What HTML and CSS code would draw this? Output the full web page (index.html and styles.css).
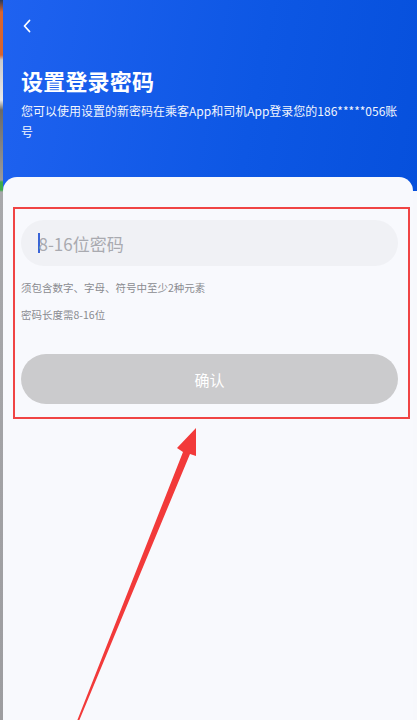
FILE: index.html
```html
<!DOCTYPE html>
<html lang="zh">
<head>
<meta charset="utf-8">
<link rel="stylesheet" href="styles.css">
</head>
<body>
<div class="screen">
  <div class="edge"></div>
  <div class="app">
    <header class="header">
      <div class="back">
        <svg width="10" height="14" viewBox="0 0 10 14"><path d="M7.5 1.5 L2.5 7 L7.5 12.5" fill="none" stroke="#fff" stroke-width="1.8" stroke-linecap="round" stroke-linejoin="round"/></svg>
      </div>
      <h1 class="title">设置登录密码</h1>
      <p class="desc">您可以使用设置的新密码在乘客App和司机App登录您的186*****056账号</p>
    </header>
    <main class="card">
      <div class="highlight">
        <div class="input"><span class="caret"></span><span class="placeholder">8-16位密码</span></div>
        <p class="hint first">须包含数字、字母、符号中至少2种元素</p>
        <p class="hint">密码长度需8-16位</p>
        <button class="confirm">确认</button>
      </div>
    </main>
  </div>
  <svg class="arrow" width="417" height="720" viewBox="0 0 417 720">
    <path d="M77 721 L183 452 L177 448 L196 428 L196 456 L190 454 L79 721 Z" fill="#f23a3a"/>
  </svg>
</div>
</body>
</html>
```
FILE: styles.css
```css
html, body { margin: 0; padding: 0; }
body {
  width: 417px;
  height: 720px;
  overflow: hidden;
  font-family: "Noto Sans CJK SC", "Noto Sans", sans-serif;
  background: #f7f8fc;
}
.screen {
  position: relative;
  display: flex;
  width: 417px;
  height: 720px;
}
.edge {
  width: 3px;
  flex: none;
  background: linear-gradient(to bottom, #2a3a5a 0, #d8642e 12px, #d8642e 55px, #c9c9cc 60px, #e9e9ea 100px, #6a6a6a 110px, #9a9a9c 180px, #3faa4a 182px, #3faa4a 190px, #a8a8ab 192px, #9d9da0 720px);
}
.app {
  flex: 1;
  display: flex;
  flex-direction: column;
  background: #f7f8fc;
}
.header {
  background: linear-gradient(100deg, #1f62f0 0%, #0d57e4 60%, #0650dc 100%);
  color: #fff;
  padding: 18px 12px 0 18px;
  height: 191px;
  box-sizing: border-box;
}
.back { height: 16px; padding-left: 1px; display: flex; align-items: center; }
.title {
  margin: 31px 0 0 0;
  font-size: 22px;
  font-weight: 700;
  line-height: 30px;
  letter-spacing: 0.2px;
}
.desc {
  margin: 5px 0 0 0;
  font-size: 12px;
  line-height: 21px;
  opacity: 0.95;
}
.card {
  flex: 1;
  margin-top: -14px;
  margin-right: 4px;
  background: #f8f9fd;
  border-radius: 14px 14px 0 0;
  padding: 30px 0 0 10px;
}
.highlight {
  width: 397px;
  box-sizing: border-box;
  border: 2px solid #f04444;
  padding: 11px 10px 13px 6px;
}
.input {
  height: 46px;
  background: #f0f1f5;
  border-radius: 23px;
  display: flex;
  align-items: center;
  padding-left: 17px;
}
.caret { width: 1.5px; height: 20px; background: #3a64d8; margin-right: -1px; }
.placeholder { font-size: 17px; color: #a9aab0; }
.hint {
  margin: 0;
  font-size: 10.5px;
  color: #8a8b90;
  line-height: 14px;
}
.hint.first { margin-top: 15px; }
.hint + .hint { margin-top: 13px; }
.confirm {
  display: block;
  width: 100%;
  margin-top: 32px;
  height: 50px;
  border: none;
  border-radius: 25px;
  background: #cbcbcd;
  color: #fff;
  font-family: inherit;
  font-size: 15px;
}
.arrow { position: absolute; left: 0; top: 0; pointer-events: none; }
```
